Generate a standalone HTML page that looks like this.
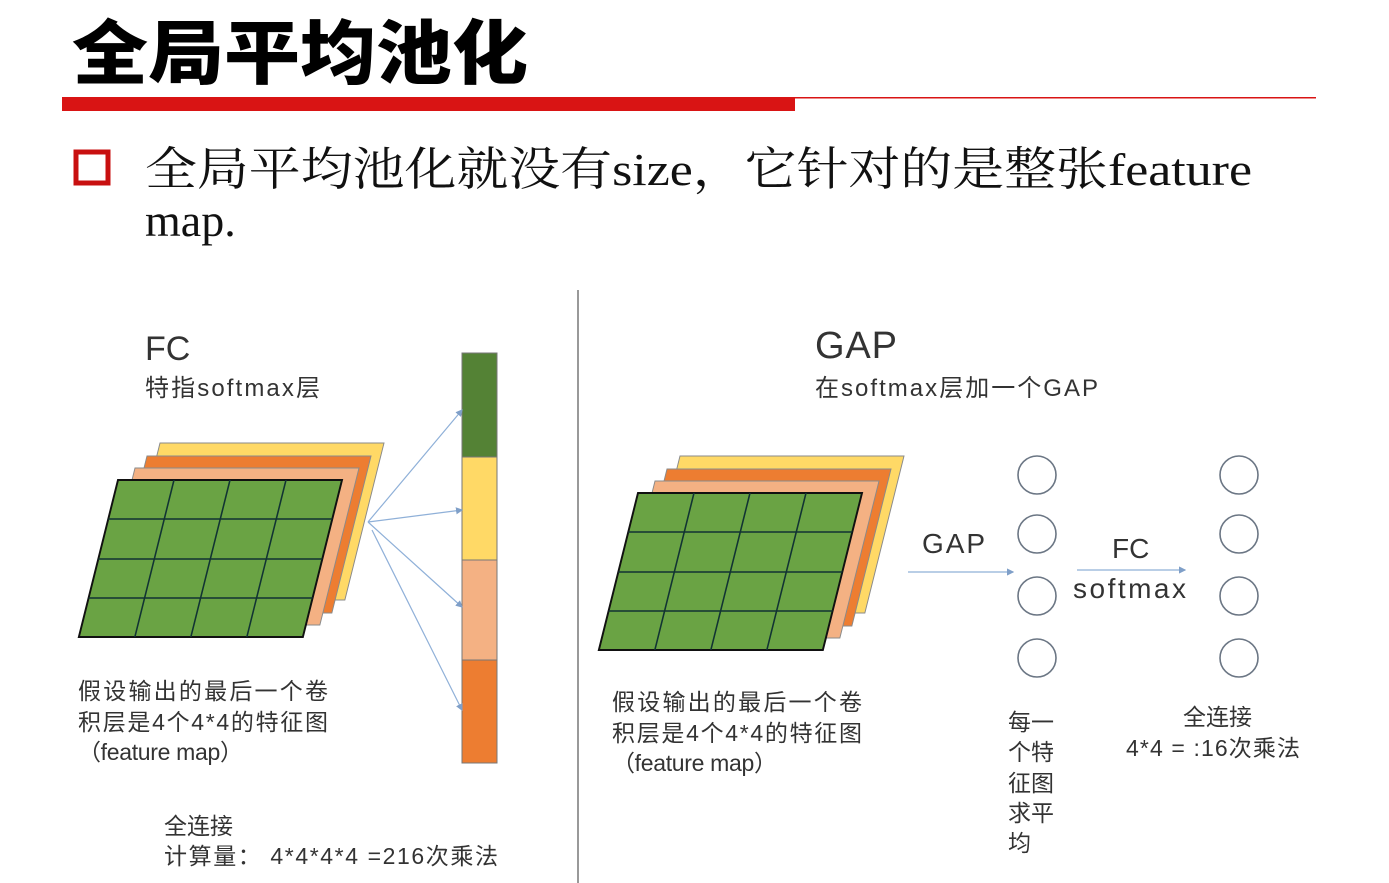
<!DOCTYPE html>
<html><head><meta charset="utf-8"><style>
html,body{margin:0;padding:0;background:#fff;width:1389px;height:883px;overflow:hidden}
svg{display:block}
.s{font-family:"Liberation Sans","Noto Sans CJK SC",sans-serif;fill:#333}
.t{font-family:"Liberation Serif","Noto Serif CJK SC",serif;fill:#111}
</style></head><body>
<svg width="1389" height="883" viewBox="0 0 1389 883" xmlns="http://www.w3.org/2000/svg">
<defs>
<marker id="a" markerWidth="6" markerHeight="6" refX="5" refY="3" orient="auto"><path d="M0,0 L6,3 L0,6z" fill="#7f9fc8"/></marker>
<g id="stackL">
 <rect x="0" y="0" width="224" height="157" fill="#FFD966" stroke="#8a8a8a" stroke-width="1" transform="translate(42,-37) skewX(-14)"/>
 <rect x="0" y="0" width="224" height="157" fill="#ED7D31" stroke="#8a8a8a" stroke-width="1" transform="translate(29,-24) skewX(-14)"/>
 <rect x="0" y="0" width="224" height="157" fill="#F4B183" stroke="#8a8a8a" stroke-width="1" transform="translate(17,-12) skewX(-14)"/>
 <g transform="skewX(-14)">
  <rect x="0" y="0" width="224" height="157" fill="#6aa344" stroke="#111" stroke-width="2"/>
  <path d="M0,39H224M0,79H224M0,118H224M56,0V157M112,0V157M168,0V157" stroke="#133" stroke-width="1.6" fill="none"/>
 </g>
</g>
</defs>

<text x="72" y="78" textLength="456" lengthAdjust="spacingAndGlyphs" style="font-family:'Noto Sans CJK SC',sans-serif;font-weight:900;font-size:70px;fill:#000">全局平均池化</text>
<rect x="62" y="97" width="733" height="14" fill="#d91414"/>
<rect x="795" y="97" width="521" height="1.5" fill="#d91414"/>

<rect x="76" y="152" width="32" height="31" fill="none" stroke="#c81010" stroke-width="5"/>
<text x="145" y="185" class="t" textLength="1107" lengthAdjust="spacingAndGlyphs" style="font-size:46px">全局平均池化就没有size，它针对的是整张feature</text>
<text x="145" y="236" class="t" style="font-size:46px">map.</text>

<line x1="578" y1="290" x2="578" y2="883" stroke="#999" stroke-width="2"/>

<!-- Left -->
<text x="145" y="360" class="s" style="font-size:34px">FC</text>
<text x="145" y="396" class="s" textLength="175" style="font-size:24px">特指softmax层</text>
<use href="#stackL" transform="translate(118,480)"/>
<rect x="462" y="353" width="35" height="104" fill="#548235" stroke="#777"/>
<rect x="462" y="457" width="35" height="103" fill="#FFD966" stroke="#777"/>
<rect x="462" y="560" width="35" height="100" fill="#F4B183" stroke="#777"/>
<rect x="462" y="660" width="35" height="103" fill="#ED7D31" stroke="#777"/>
<g stroke="#8fb0d8" stroke-width="1.2" marker-end="url(#a)">
<line x1="368" y1="522" x2="462" y2="410"/>
<line x1="368" y1="522" x2="462" y2="510"/>
<line x1="368" y1="522" x2="462" y2="607"/>
<line x1="372" y1="530" x2="462" y2="710"/>
</g>
<g class="s" style="font-size:23px">
<text x="78" y="699" textLength="250">假设输出的最后一个卷</text>
<text x="78" y="730" textLength="250">积层是4个4*4的特征图</text>
<text x="78" y="760" textLength="165">（feature map）</text>
<text x="164" y="834">全连接</text>
<text x="164" y="864" textLength="334">计算量：  4*4*4*4 =216次乘法</text>
</g>

<!-- Right -->
<text x="815" y="358" class="s" textLength="82" style="font-size:38px">GAP</text>
<text x="815" y="396" class="s" textLength="283" style="font-size:24px">在softmax层加一个GAP</text>
<use href="#stackL" transform="translate(638,493)"/>
<text x="922" y="553" class="s" textLength="63" style="font-size:28px">GAP</text>
<line x1="908" y1="572" x2="1013" y2="572" stroke="#8fb0d8" stroke-width="1.2" marker-end="url(#a)"/>
<text x="1112" y="558" class="s" style="font-size:28px">FC</text>
<line x1="1077" y1="570" x2="1185" y2="570" stroke="#8fb0d8" stroke-width="1.2" marker-end="url(#a)"/>
<text x="1073" y="598" class="s" textLength="113" style="font-size:28px">softmax</text>
<g fill="none" stroke="#6b7684" stroke-width="1.6">
<circle cx="1037" cy="475" r="19"/><circle cx="1037" cy="534" r="19"/><circle cx="1037" cy="596" r="19"/><circle cx="1037" cy="658" r="19"/>
<circle cx="1239" cy="475" r="19"/><circle cx="1239" cy="534" r="19"/><circle cx="1239" cy="596" r="19"/><circle cx="1239" cy="658" r="19"/>
</g>
<g class="s" style="font-size:23px">
<text x="612" y="710" textLength="250">假设输出的最后一个卷</text>
<text x="612" y="741" textLength="250">积层是4个4*4的特征图</text>
<text x="612" y="771" textLength="165">（feature map）</text>
<text x="1008" y="730">每一</text>
<text x="1008" y="760">个特</text>
<text x="1008" y="791">征图</text>
<text x="1008" y="821">求平</text>
<text x="1008" y="851">均</text>
<text x="1183" y="725">全连接</text>
<text x="1126" y="756" textLength="174">4*4 = :16次乘法</text>
</g>
</svg>
</body></html>
